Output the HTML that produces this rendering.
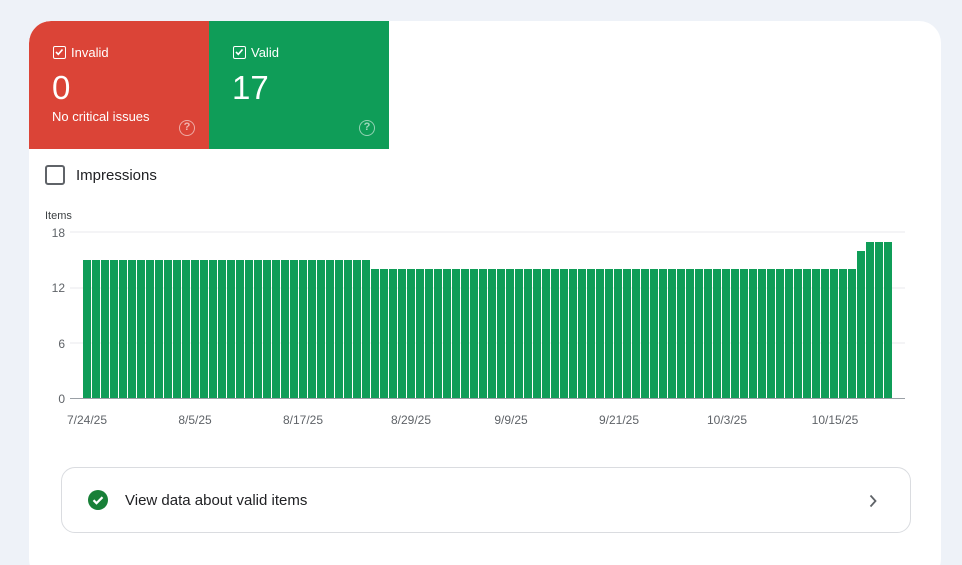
<!DOCTYPE html>
<html><head><meta charset="utf-8"><style>
*{margin:0;padding:0;box-sizing:border-box}
html,body{width:962px;height:565px;overflow:hidden}
body{background:#eef2f8;font-family:"Liberation Sans",Arial,sans-serif;position:relative}
.card{position:absolute;left:29px;top:21px;width:912px;height:560px;background:#fff;border-radius:22px;overflow:hidden}
.tile{position:absolute;top:0;height:128px;width:180px;color:#fff}
.red{left:0;background:#db4437;border-top-left-radius:22px}
.green{left:180px;background:#0f9d58}
.lab{position:absolute;left:24px;top:24px;font-size:13px;display:flex;align-items:center;gap:5px}
.cb{width:13px;height:13px;border:1.5px solid #fff;border-radius:2px;display:inline-block;position:relative}
.num{position:absolute;left:23px;top:48px;font-size:33px}
.sub{position:absolute;left:23px;top:88px;font-size:13px}
.q{position:absolute;left:150px;top:99px;width:16px;height:16px;border:1.5px solid rgba(255,255,255,.55);border-radius:50%;font-size:11px;text-align:center;line-height:13px;color:rgba(255,255,255,.6);font-weight:bold}
.imp{position:absolute;left:16px;top:144px;display:flex;align-items:center;gap:11px;font-size:15px;color:#202124}
.imp span{width:20px;height:20px;border:2px solid #5f6368;border-radius:3px}
.btn{position:absolute;left:32px;top:446px;width:850px;height:66px;border:1px solid #dadce0;border-radius:14px}
.btn .t{position:absolute;left:63px;top:24px;font-size:15px;color:#202124}
</style></head><body>
<div class="card">
<div class="tile red"><div class="lab"><span class="cb"><svg width="10" height="10" style="position:absolute;left:0;top:0"><path d="M2 5l2.3 2.3L8.5 2.5" stroke="#fff" stroke-width="1.6" fill="none"/></svg></span>Invalid</div><div class="num">0</div><div class="sub">No critical issues</div><div class="q">?</div></div>
<div class="tile green"><div class="lab"><span class="cb"><svg width="10" height="10" style="position:absolute;left:0;top:0"><path d="M2 5l2.3 2.3L8.5 2.5" stroke="#fff" stroke-width="1.6" fill="none"/></svg></span>Valid</div><div class="num">17</div><div class="q">?</div></div>
<div class="imp"><span></span>Impressions</div>
<div class="btn"><svg style="position:absolute;left:26px;top:22px" width="20" height="20"><circle cx="10" cy="10" r="10" fill="#188038"/><path d="M5.5 10.2l3 3 6-6" stroke="#fff" stroke-width="2.2" fill="none"/></svg><div class="t">View data about valid items</div><svg style="position:absolute;left:806px;top:26px" width="10" height="14"><path d="M2.5 1.5l5 5.5-5 5.5" stroke="#5f6368" stroke-width="1.8" fill="none"/></svg></div>
</div>
<svg style="position:absolute;left:0;top:0" width="962" height="565" font-family="Liberation Sans,Arial,sans-serif" font-size="12" fill="#5f6368">
<defs><pattern id="p" x="83" y="0" width="9" height="600" patternUnits="userSpaceOnUse"><rect x="0" y="0" width="8" height="600" fill="#0f9d58"/></pattern></defs>
<text x="45" y="219" font-size="11" fill="#3c4043">Items</text>
<g stroke="#e8eaed"><line x1="70" y1="232" x2="905" y2="232"/><line x1="70" y1="288" x2="905" y2="288"/><line x1="70" y1="343" x2="905" y2="343"/></g>
<text x="65" y="237" text-anchor="end">18</text><text x="65" y="292" text-anchor="end">12</text><text x="65" y="348" text-anchor="end">6</text><text x="65" y="403" text-anchor="end">0</text>
<rect x="83" y="260" width="288" height="138" fill="url(#p)"/>
<rect x="371" y="269" width="486" height="129" fill="url(#p)"/>
<rect x="857" y="251" width="9" height="147" fill="url(#p)"/>
<rect x="866" y="242" width="27" height="156" fill="url(#p)"/>
<line x1="70" y1="398.5" x2="905" y2="398.5" stroke="#9aa0a6"/>
<g text-anchor="middle"><text x="87" y="424">7/24/25</text><text x="195" y="424">8/5/25</text><text x="303" y="424">8/17/25</text><text x="411" y="424">8/29/25</text><text x="511" y="424">9/9/25</text><text x="619" y="424">9/21/25</text><text x="727" y="424">10/3/25</text><text x="835" y="424">10/15/25</text></g>
</svg>
</body></html>
